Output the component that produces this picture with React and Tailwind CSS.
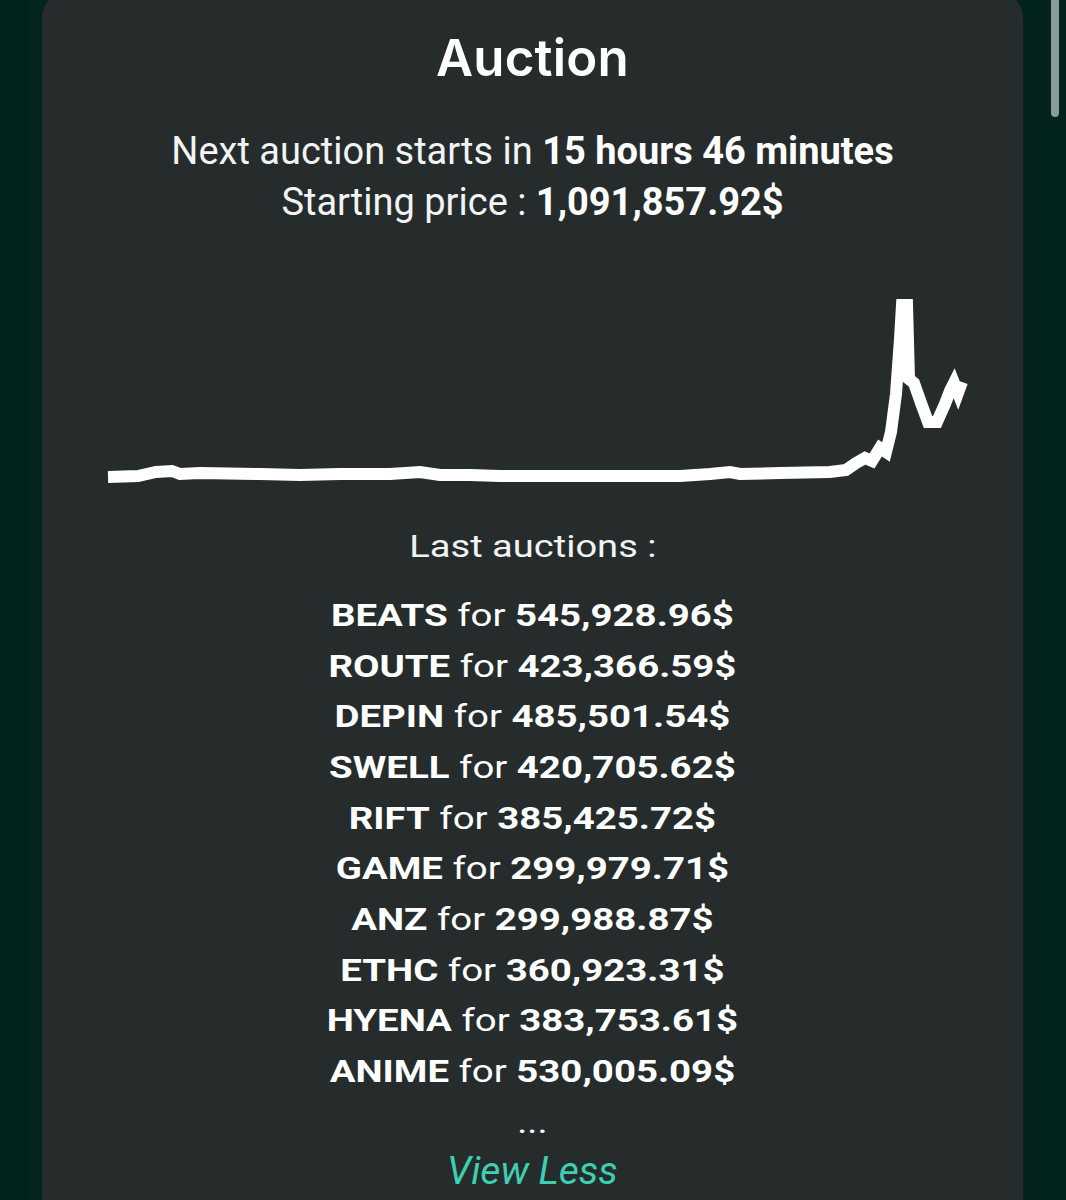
import React from "react";

const auctions = [
  ["BEATS", "545,928.96$"],
  ["ROUTE", "423,366.59$"],
  ["DEPIN", "485,501.54$"],
  ["SWELL", "420,705.62$"],
  ["RIFT", "385,425.72$"],
  ["GAME", "299,979.71$"],
  ["ANZ", "299,988.87$"],
  ["ETHC", "360,923.31$"],
  ["HYENA", "383,753.61$"],
  ["ANIME", "530,005.09$"],
];

const pts = [
  [108, 478], [138, 477], [156, 473], [172, 472], [180, 475], [200, 474], [260, 475],
  [300, 476], [340, 475], [390, 475], [420, 473], [440, 476], [470, 476], [500, 477],
  [560, 477], [620, 477], [680, 477], [710, 475], [730, 473], [740, 475], [780, 474],
  [830, 473], [846, 471], [856, 464], [865, 459], [872, 462], [880, 449], [886, 453],
  [891, 433], [896, 395], [900, 340], [902, 306], [907, 306], [909, 380], [914, 384],
  [921, 404], [928, 423], [937, 423], [945, 405], [950, 392], [954, 384], [958, 394], [962, 383],
];

export default function App() {
  return (
    <div className="relative w-[1066px] h-[1200px] overflow-hidden bg-[#03231f] flex">
      <div className="w-[28px] shrink-0 bg-[#02221d]" />
      <div className="w-[14px] shrink-0 bg-[#04251f]" />
      <div
        className="w-[981px] shrink-0 -mt-[8px] h-[1240px] rounded-t-[26px] bg-[#262c2c] text-white flex flex-col items-center"
        style={{ fontFamily: "Roboto, 'Liberation Sans', sans-serif" }}
      >
        <div
          className="mt-[36px] text-[51px] leading-[60px] font-semibold tracking-[0.2px]"
          style={{ fontFamily: "Inter, 'Liberation Sans', sans-serif" }}
        >
          Auction
        </div>
        <div className="mt-[38px] text-[38px] leading-[51px] text-center text-[#f2f4f4] whitespace-nowrap">
          <div>
            Next auction starts in <span className="font-bold text-white">15 hours 46 minutes</span>
          </div>
          <div>
            Starting price : <span className="font-bold text-white">1,091,857.92$</span>
          </div>
        </div>
        <svg
          className="mt-[61px] shrink-0"
          width="981"
          height="210"
          viewBox="42 290 981 210"
        >
          <polyline
            points={pts.map((p) => p.join(",")).join(" ")}
            fill="none"
            stroke="#ffffff"
            strokeWidth="12"
            strokeLinejoin="miter"
            strokeMiterlimit="4"
          />
        </svg>
        <div className="mt-[22px] text-[32px] leading-[51px] text-[#f2f4f4] scale-x-[1.19] whitespace-nowrap">
          Last auctions :
        </div>
        <div className="mt-[18px] text-[32px] leading-[50.67px] text-center scale-x-[1.2] whitespace-nowrap">
          {auctions.map(([n, v]) => (
            <div key={n}>
              <span className="font-bold">{n}</span> for <span className="font-bold">{v}</span>
            </div>
          ))}
          <div className="leading-[50px]">...</div>
        </div>
        <div className="mt-[-1px] text-[39px] leading-[51px] italic text-[#3ecfb3]">View Less</div>
      </div>
      <div className="absolute left-[1051px] top-[-10px] w-[8px] h-[127px] rounded-full bg-[#8a9c9c]" />
    </div>
  );
}
